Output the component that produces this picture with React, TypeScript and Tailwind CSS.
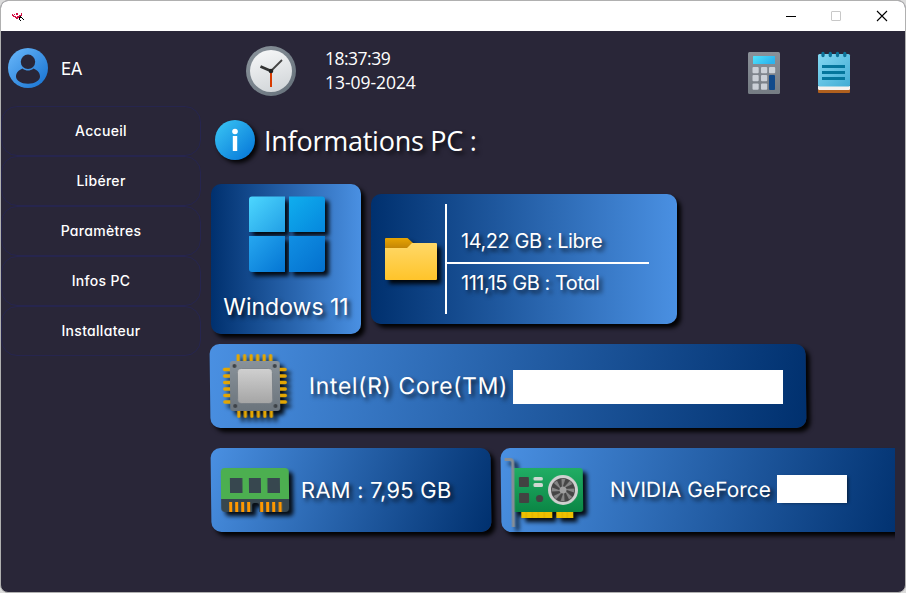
import type { ReactNode } from "react";

const NAV = ["Accueil", "Libérer", "Paramètres", "Infos PC", "Installateur"];

const geometric = "font-[Inter,'Open_Sans',sans-serif] [font-feature-settings:'cv11'] whitespace-nowrap";
const humanist = "font-['Open_Sans','Noto_Sans',sans-serif] whitespace-nowrap";
const textShadow = "[text-shadow:3px_3px_4px_rgba(0,0,0,0.75)]";
const iconShadow = "[filter:drop-shadow(4px_4px_2px_rgba(0,0,0,0.9))]";
const cardShadow = "shadow-[4px_4px_4px_0px_rgba(0,0,0,0.95)]";

function TitleBar() {
  return (
    <div className="flex h-[30px] shrink-0 items-center bg-white">
      <svg className="ml-[11px] mt-0.5" width="13" height="9" viewBox="0 0 13 9" shapeRendering="crispEdges">
        <path
          fill="#d31145"
          d="M0 1h1v1H0zM2 1h1v1H2zM4 0h2v2H4zM9 0h1v2H9zM0 2h2v1H0zM7 2h3v1H7zM1 3h3v1H1zM5 3h3v1H5zM3 4h4v1H3zM4 5h2v1H4z"
        />
        <path fill="#000" d="M7 4h3v1H7zM8 3h1v1H8zM7 5h1v2H7zM10 5h1v1h-1zM8 7h1v1H8zM11 6h1v1h-1z" />
      </svg>
      <div className="flex-1" />
      <svg className="-mt-px mr-[17px]" width="102" height="12" viewBox="0 0 102 12">
        <path d="M0 6.5h10" stroke="#000" />
        <rect x="45.5" y="1.5" width="9" height="9" rx="0.5" fill="none" stroke="#c8c8c8" />
        <path d="M91 1l10 10M101 1l-10 10" stroke="#000" strokeWidth="1.1" />
      </svg>
    </div>
  );
}

function UserIcon() {
  return (
    <svg className="-mt-px" width="40" height="40" viewBox="0 0 40 40">
      <defs>
        <linearGradient id="user" x1="0" y1="0" x2="1" y2="1">
          <stop offset="0" stopColor="#6bb9fb" />
          <stop offset="1" stopColor="#1470d0" />
        </linearGradient>
      </defs>
      <circle cx="20" cy="20" r="20" fill="url(#user)" />
      <path
        d="M14.500 20.500C10.500 22 8 25 8 28.500C8 32.500 13 35.700 20 35.700S32 32.500 32 28.500C32 25 29.500 22 25.500 20.500C22 23.300 18 23.300 14.500 20.500Z"
        fill="#292638"
      />
      <ellipse cx="20" cy="13.800" rx="7.200" ry="7.300" fill="#292638" />
    </svg>
  );
}

function ClockIcon() {
  return (
    <svg width="50" height="50" viewBox="0 0 50 50">
      <defs>
        <linearGradient id="rim" x1="0" y1="0" x2="1" y2="1">
          <stop offset="0" stopColor="#8b949c" />
          <stop offset="1" stopColor="#65707a" />
        </linearGradient>
        <linearGradient id="dial" x1="0.3" y1="0" x2="0.6" y2="1">
          <stop offset="0" stopColor="#f5f6f7" />
          <stop offset="1" stopColor="#d2d6d9" />
        </linearGradient>
      </defs>
      <circle cx="25" cy="25" r="25" fill="url(#rim)" />
      <circle cx="25" cy="25" r="21" fill="url(#dial)" />
      <path d="M25 25v16" stroke="#d83b01" strokeWidth="2" />
      <path d="M25 25L36 14" stroke="#444" strokeWidth="1.800" />
      <path d="M25 25L14.500 20.500" stroke="#333" strokeWidth="2.800" />
      <circle cx="25" cy="25" r="2.300" fill="#222" />
    </svg>
  );
}

function CalculatorIcon() {
  const keys = [
    [4.500, 15], [13, 15], [21, 15],
    [4.500, 23], [13, 23],
    [4.500, 31.500], [13, 31.500],
  ];
  return (
    <svg width="32" height="42" viewBox="0 0 32 42">
      <defs>
        <linearGradient id="lcd" x1="0" y1="0" x2="1" y2="0.4">
          <stop offset="0" stopColor="#4de2fb" />
          <stop offset="1" stopColor="#2db4ee" />
        </linearGradient>
        <linearGradient id="body" x1="0" y1="0" x2="0" y2="1">
          <stop offset="0" stopColor="#8b9199" />
          <stop offset="1" stopColor="#757c83" />
        </linearGradient>
      </defs>
      <rect width="32" height="42" rx="1.500" fill="url(#body)" />
      <rect x="5" y="4" width="22" height="8" rx="0.500" fill="url(#lcd)" />
      {keys.map(([x, y]) => (
        <rect key={`${x}-${y}`} x={x} y={y} width="6.200" height="6.300" rx="1" fill="#cbd0d7" />
      ))}
      <rect x="21" y="23" width="6" height="15" rx="1" fill="#114a8b" />
    </svg>
  );
}

function NotepadIcon() {
  return (
    <svg className="-mt-px overflow-visible" width="32" height="42" viewBox="0 0 32 42">
      <defs>
        <linearGradient id="page" x1="0" y1="0" x2="1" y2="1">
          <stop offset="0" stopColor="#83d8f2" />
          <stop offset="1" stopColor="#42acd4" />
        </linearGradient>
      </defs>
      <rect y="37" width="32" height="5" rx="1" fill="#b0601e" />
      <path d="M0 35h32v2.500q0 1.500-1.500 1.500H1.500Q0 39 0 37.500z" fill="#f5f1ee" />
      <rect y="3" width="32" height="32.500" rx="1.500" fill="url(#page)" />
      <path d="M5 2.500v2M12.300 2.500v2M19.500 2.500v2M26.800 2.500v2" stroke="#0c7398" strokeWidth="3.300" strokeLinecap="round" />
      <path d="M4 15.500h23M4 21.500h23M4 27.500h23" stroke="#04769c" strokeWidth="3" />
    </svg>
  );
}

function InfoIcon() {
  return (
    <svg className="overflow-visible [filter:drop-shadow(3px_3px_2px_rgba(0,0,0,0.9))]" width="40" height="40" viewBox="0 0 40 40">
      <defs>
        <linearGradient id="info" x1="0.1" y1="0.1" x2="0.9" y2="0.9">
          <stop offset="0" stopColor="#36bff2" />
          <stop offset="1" stopColor="#087bda" />
        </linearGradient>
      </defs>
      <circle cx="20" cy="20" r="20" fill="url(#info)" />
      <circle cx="20" cy="11.500" r="2.800" fill="#fff" />
      <rect x="17.800" y="16" width="4.400" height="15" fill="#fff" />
    </svg>
  );
}

function WindowsIcon() {
  return (
    <svg className={`ml-px overflow-visible ${iconShadow}`} width="76" height="76" viewBox="0 0 76 76">
      <defs>
        <linearGradient id="w1" x1="0" y1="0" x2="1" y2="1">
          <stop offset="0" stopColor="#4dd7ff" />
          <stop offset="1" stopColor="#229fe5" />
        </linearGradient>
        <linearGradient id="w2" x1="0" y1="0" x2="1" y2="1">
          <stop offset="0" stopColor="#10aeee" />
          <stop offset="1" stopColor="#0587dd" />
        </linearGradient>
        <linearGradient id="w3" x1="0" y1="0" x2="1" y2="1">
          <stop offset="0" stopColor="#26a7f0" />
          <stop offset="1" stopColor="#0475d3" />
        </linearGradient>
        <linearGradient id="w4" x1="0" y1="0" x2="1" y2="1">
          <stop offset="0" stopColor="#118fe3" />
          <stop offset="1" stopColor="#0370ce" />
        </linearGradient>
      </defs>
      <path d="M3 0.500H36V36H0V3.500Q0 0.500 3 0.500Z" fill="url(#w1)" />
      <path d="M40 0.500H73Q76 0.500 76 3.500V36H40Z" fill="url(#w2)" />
      <path d="M0 40H36V76H3Q0 76 0 73Z" fill="url(#w3)" />
      <path d="M40 40H76V73Q76 76 73 76H40Z" fill="url(#w4)" />
    </svg>
  );
}

function FolderIcon() {
  return (
    <svg className={`overflow-visible ${iconShadow}`} width="52" height="42" viewBox="0 0 52 42">
      <defs>
        <linearGradient id="tab" x1="0" y1="0" x2="0" y2="1">
          <stop offset="0" stopColor="#e8a502" />
          <stop offset="1" stopColor="#bd8006" />
        </linearGradient>
        <linearGradient id="front" x1="0" y1="0" x2="0" y2="1">
          <stop offset="0" stopColor="#ffd868" />
          <stop offset="1" stopColor="#ffc42a" />
        </linearGradient>
      </defs>
      <path d="M1 0H22.500L28 5V12H0V1Q0 0 1 0Z" fill="url(#tab)" />
      <path d="M0 10H22L27 5H51Q52 5 52 6V41Q52 42 51 42H1Q0 42 0 41Z" fill="url(#front)" />
    </svg>
  );
}

function CpuIcon() {
  const pins = [9, 15.500, 22, 28.500, 35, 41.500];
  return (
    <svg className={`overflow-visible ${iconShadow}`} width="64" height="64" viewBox="0 0 64 64">
      <defs>
        <linearGradient id="pkg" x1="0" y1="0" x2="0" y2="1">
          <stop offset="0" stopColor="#89929a" />
          <stop offset="1" stopColor="#6b747c" />
        </linearGradient>
        <linearGradient id="die" x1="0" y1="0" x2="0" y2="1">
          <stop offset="0" stopColor="#d0d0d0" />
          <stop offset="1" stopColor="#a5a5a5" />
        </linearGradient>
      </defs>
      {pins.map((p) => (
        <path
          key={p}
          d={`M${p + 6.500} 1.700V9M${p + 6.500} 55V62.300M1.700 ${p + 6.500}H9M55 ${p + 6.500}H62.300`}
          stroke="#e3a603"
          strokeWidth="3.300"
          strokeLinecap="round"
        />
      ))}
      <rect x="7" y="7" width="50" height="50" rx="3" fill="url(#pkg)" />
      <rect x="14.500" y="14.500" width="35" height="35" rx="4" fill="url(#die)" stroke="#737b83" strokeWidth="0.800" />
      <g fill="#3d4247">
        <circle cx="11.700" cy="12" r="2" />
        <circle cx="52" cy="12" r="2" />
        <circle cx="12" cy="52" r="2" />
        <circle cx="52.300" cy="52" r="2" />
      </g>
    </svg>
  );
}

function RamIcon() {
  return (
    <svg className={`overflow-visible ${iconShadow}`} width="68" height="44" viewBox="0 0 68 44">
      <path d="M0 30H68V40Q68 44 64 44H38V37Q38 35 35.500 35H33Q31 35 31 37V44H4Q0 44 0 40Z" fill="#37474f" />
      <path d="M4 0H64Q68 0 68 4V31H0V4Q0 0 4 0Z" fill="#4caf50" />
      <path d="M9 10h12.500v15H9zM28 10h12v15H28zM46.500 10h12.500v15H46.500z" fill="#37474f" />
      <path
        d="M8 34h3v10H8zM14 34h3v10h-3zM20 34h3v10h-3zM26 34h3v10h-3zM39 34h3v10h-3zM45 34h3v10h-3zM51 34h3v10h-3zM57.500 34h3v10h-3z"
        fill="#ff9800"
      />
    </svg>
  );
}

function GpuIcon() {
  const blades = [0, 45, 90, 135, 180, 225, 270, 315];
  return (
    <svg className={`mt-[5px] overflow-visible ${iconShadow}`} width="78" height="69" viewBox="0 0 78 69">
      <defs>
        <linearGradient id="pcb" x1="0" y1="0" x2="0" y2="1">
          <stop offset="0" stopColor="#21ad64" />
          <stop offset="1" stopColor="#0b8645" />
        </linearGradient>
      </defs>
      <path d="M8 10H75Q78 10 78 13V51Q78 54 75 54H8Z" fill="url(#pcb)" />
      <path d="M16 54H47V60H16zM51 54H68V60H51z" fill="#edc000" />
      <path d="M21 54v6M27 54v6M33 54v6M39 54v6M57 54v6M62 54v6" stroke="#d9a500" strokeOpacity="0.6" />
      <path d="M0 1.500H5.500Q8 1.500 8 4.500V69" fill="none" stroke="#868e96" strokeWidth="3" />
      <rect x="14" y="19" width="10" height="10" rx="1" fill="#424242" />
      <rect x="14" y="35" width="10" height="10" rx="1" fill="#424242" />
      <rect x="28.500" y="19" width="9.500" height="3.500" rx="1.500" fill="#cfd8d2" />
      <rect x="28.500" y="25" width="9.500" height="4" rx="1.500" fill="#cfd8d2" />
      <circle cx="34.500" cy="40.500" r="3.600" fill="#424242" />
      <circle cx="58" cy="32" r="13.500" fill="#454545" stroke="#d0d0d0" strokeWidth="3" />
      {blades.map((a) => (
        <path key={a} d="M57 31L56.500 20.500L60.500 21Z" fill="#858585" transform={`rotate(${a} 58 32)`} />
      ))}
      <circle cx="58" cy="32" r="3.500" fill="#a0a0a0" />
    </svg>
  );
}

function Label({ className, children }: { className: string; children: ReactNode }) {
  return <span className={`${geometric} ${textShadow} text-white ${className}`}>{children}</span>;
}

export default function App() {
  return (
    <div className="h-[593px] w-[906px] overflow-hidden bg-[#dcdcdc]">
      <div className="flex h-full w-full flex-col overflow-hidden rounded-lg border border-[#b0b0b0] bg-[#292638]">
        <TitleBar />
        <div className="flex min-h-0 flex-1">
          <aside className="flex w-[200px] shrink-0 flex-col">
            <div className="flex h-[75px] items-center pl-[7px]">
              <UserIcon />
              <span className={`${geometric} ml-[13px] text-[17px] leading-6 tracking-[-0.4px] text-white`}>EA</span>
            </div>
            <nav className="flex flex-col">
              {NAV.map((item) => (
                <button
                  key={item}
                  className={`${geometric} h-[50px] rounded-[16px] border border-[#26254e] pb-0.5 text-[14px] font-medium tracking-[0.3px] text-white`}
                >
                  {item}
                </button>
              ))}
            </nav>
          </aside>

          <main className="flex min-w-0 flex-1 flex-col pl-[9px]">
            <header className="flex h-20 shrink-0 items-center pl-9">
              <ClockIcon />
              <div className={`${humanist} -mt-0.5 ml-[29px] flex flex-col text-[17.5px] leading-6 text-white`}>
                <span className="tracking-[-0.5px]">18:37:39</span>
                <span className="tracking-[-0.05px]">13-09-2024</span>
              </div>
              <div className="ml-auto mr-[55px] mt-1 flex gap-[38px]">
                <CalculatorIcon />
                <NotepadIcon />
              </div>
            </header>

            <div className="flex h-[73px] shrink-0 items-start pl-[5px] pt-[9px]">
              <InfoIcon />
              <h1 className={`${humanist} ${textShadow} ml-[9px] mt-px text-[27px] leading-10 tracking-[-0.25px] text-white`}>
                Informations PC :
              </h1>
            </div>

            <div className="flex shrink-0 gap-[10px] pl-px">
              <section className={`flex size-[150px] flex-col items-center rounded-[10px] bg-[linear-gradient(90deg,#00306e,#4a90e2)] pt-3 ${cardShadow}`}>
                <WindowsIcon />
                <Label className="mt-[17px] text-[23px] leading-9">Windows 11</Label>
              </section>
              <section className={`mt-[10px] flex h-[130px] w-[306px] rounded-[10px] bg-[linear-gradient(90deg,#00306e,#4a90e2)] ${cardShadow}`}>
                <div className="flex w-[74px] items-start pl-[14px] pt-11">
                  <FolderIcon />
                </div>
                <div className="my-[10px] flex w-[204px] flex-col border-l-2 border-white">
                  <Label className="h-[60px] border-b-2 border-white pl-[14px] pt-[22px] text-[20px] leading-[30px] tracking-[-0.45px]">
                    14,22 GB : Libre
                  </Label>
                  <Label className="pl-[14px] pt-1 text-[20px] leading-[30px] tracking-[-0.45px]">111,15 GB : Total</Label>
                </div>
              </section>
            </div>

            <section className={`mt-[10px] flex h-[84px] w-[596px] shrink-0 skew-x-[0.7deg] items-center rounded-[10px] bg-[linear-gradient(100deg,#4a90e2,#00306e)] pl-[13px] ${cardShadow}`}>
              <CpuIcon />
              <Label className="ml-[22px] w-[204px] text-[23px] leading-9 tracking-[0.6px]">Intel(R) Core(TM)</Label>
              <div className="mt-0.5 h-[34px] w-[270px] -skew-x-[0.7deg] bg-white" />
            </section>

            <div className="flex w-[685px] gap-[10px] overflow-hidden pb-3 pl-px pt-5">
              <section className={`flex h-[84px] w-[280px] shrink-0 skew-x-[0.7deg] items-center rounded-[10px] bg-[linear-gradient(110deg,#4a90e2,#00306e)] pl-[10px] ${cardShadow}`}>
                <RamIcon />
                <Label className="ml-3 text-[22px] leading-9 tracking-[0.2px]">RAM : 7,95 GB</Label>
              </section>
              <section className={`flex h-[84px] w-[404px] shrink-0 skew-x-[0.7deg] items-center rounded-[10px] bg-[linear-gradient(105deg,#4a90e2,#00306e)] pl-1 ${cardShadow}`}>
                <GpuIcon />
                <Label className="ml-[27px] w-[167px] text-[21px] leading-9">NVIDIA GeForce</Label>
                <div className="-mt-0.5 h-7 w-[70px] -skew-x-[0.7deg] bg-white shadow-[3px_1px_3px_-1px_rgba(0,0,0,0.5)]" />
              </section>
            </div>
          </main>
        </div>
      </div>
    </div>
  );
}
